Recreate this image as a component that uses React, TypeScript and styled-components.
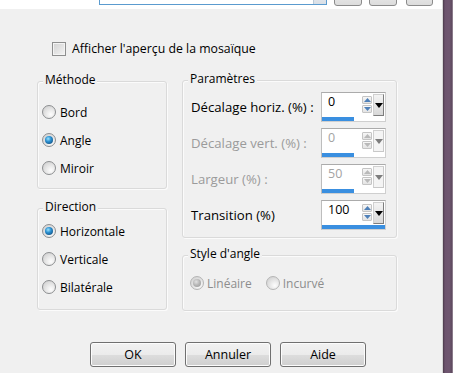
import styled, { createGlobalStyle } from 'styled-components';

const GlobalStyle = createGlobalStyle`
  html, body {
    margin: 0;
    padding: 0;
  }
  body {
    background: #f0f0f0;
    font-family: "Open Sans", "Noto Sans", sans-serif;
    color: #000;
  }
`;

interface Param {
  label: string;
  value: string;
  fill: number;
  disabled?: boolean;
}

const params: Param[] = [
  { label: 'Décalage horiz. (%) :', value: '0', fill: 0.5 },
  { label: 'Décalage vert. (%) :', value: '0', fill: 0.5, disabled: true },
  { label: 'Largeur (%) :', value: '50', fill: 0.5, disabled: true },
  { label: 'Transition (%)', value: '100', fill: 1 },
];

function Arrow({ dir, color }: { dir: 'up' | 'down'; color: string }) {
  return (
    <svg width='7' height='4' viewBox='0 0 7 4'>
      {dir === 'up' ? (
        <polygon points='0,4 3.5,0 7,4' fill={color} />
      ) : (
        <polygon points='0,0 3.5,4 7,0' fill={color} />
      )}
    </svg>
  );
}

function Spinner({ value, fill, disabled }: Param) {
  return (
    <SpinBox>
      <SpinTop>
        <SpinValue $disabled={disabled}>{value}</SpinValue>
        <SpinArrows>
          <SpinArrow>
            <Arrow dir='up' color={disabled ? '#b9b9b9' : '#4f80b8'} />
          </SpinArrow>
          <SpinArrow>
            <Arrow dir='down' color={disabled ? '#b9b9b9' : '#4f80b8'} />
          </SpinArrow>
        </SpinArrows>
        <DropBtn $disabled={disabled}>
          <svg width='8' height='5' viewBox='0 0 8 5'>
            <polygon points='0,0 4,5 8,0' fill={disabled ? '#7d7d7d' : '#000'} />
          </svg>
        </DropBtn>
      </SpinTop>
      <SpinBar style={{ width: `${fill * 100}%` }} />
    </SpinBox>
  );
}

function Radio({ label, checked, disabled }: { label: string; checked?: boolean; disabled?: boolean }) {
  return (
    <RadioItem $disabled={disabled}>
      <RadioDot $checked={checked} $disabled={disabled} />
      {label}
    </RadioItem>
  );
}

export default function App() {
  return (
    <>
      <GlobalStyle />
      <Window>
        <Panel>
          <TopStrip>
            <ComboBox>
              <ComboArrow />
            </ComboBox>
            <ToolButton $w={28} $ml={7} />
            <ToolButton $w={28} $ml={7} />
            <ToolButton $w={27} $ml={9} />
          </TopStrip>

          <CheckRow>
            <CheckBox />
            Afficher l'aperçu de la mosaïque
          </CheckRow>

          <Columns>
            <Column $w={130} $pt={1}>
              <GroupBox $h={108}>
                <Legend>Méthode</Legend>
                <RadioList $pt={11}>
                  <Radio label='Bord' />
                  <Radio label='Angle' checked />
                  <Radio label='Miroir' />
                </RadioList>
              </GroupBox>
              <GroupBox $h={102} $mt={19}>
                <Legend>Direction</Legend>
                <RadioList $pt={3}>
                  <Radio label='Horizontale' checked />
                  <Radio label='Verticale' />
                  <Radio label='Bilatérale' />
                </RadioList>
              </GroupBox>
            </Column>

            <Column $w={215}>
              <GroupBox $h={158}>
                <Legend>Paramètres</Legend>
                <ParamList>
                  {params.map((p) => (
                    <ParamRow key={p.label}>
                      <ParamLabel $disabled={p.disabled}>{p.label}</ParamLabel>
                      <Spinner {...p} />
                    </ParamRow>
                  ))}
                </ParamList>
              </GroupBox>
              <GroupBox $h={56} $mt={17}>
                <Legend>Style d'angle</Legend>
                <InlineRadios>
                  <Radio label='Linéaire' checked disabled />
                  <Radio label='Incurvé' disabled />
                </InlineRadios>
              </GroupBox>
            </Column>
          </Columns>

          <ButtonRow>
            <DialogButton>OK</DialogButton>
            <DialogButton>Annuler</DialogButton>
            <DialogButton>Aide</DialogButton>
          </ButtonRow>
        </Panel>
        <Frame />
      </Window>
    </>
  );
}

const Window = styled.div`
  display: flex;
  width: 453px;
  height: 373px;
  overflow: hidden;
`;
const Panel = styled.div`
  width: 442px;
  flex-shrink: 0;
  display: flex;
  flex-direction: column;
  background: #f0f0f0;
`;
const Frame = styled.div`
  flex: 1;
  border-left: 1px solid #d6d6d6;
  border-right: 1px solid #8a7a8a;
  background: linear-gradient(90deg, #4b3a4b 0, #6c536d 2px, #6f5670 70%, #5d4a5e 100%);
`;
const TopStrip = styled.div`
  height: 9px;
  flex-shrink: 0;
  display: flex;
  align-items: flex-end;
  padding-left: 99px;
  background: #fff;
  overflow: hidden;
`;
const ComboBox = styled.div`
  box-sizing: border-box;
  width: 228px;
  height: 20px;
  margin-bottom: 4px;
  display: flex;
  justify-content: flex-end;
  border: 1px solid #5b9bcf;
  background: #fff;
`;
const ComboArrow = styled.div`
  width: 12px;
  background: linear-gradient(#eef2f6, #d9dfe6);
  border-left: 1px solid #b9c9d8;
`;
const ToolButton = styled.div<{ $w: number; $ml: number }>`
  box-sizing: border-box;
  width: ${(p) => p.$w}px;
  height: 20px;
  margin: 0 0 3px ${(p) => p.$ml}px;
  border: 1px solid #8b8b8b;
  border-radius: 3px;
  background: linear-gradient(#f2f2f2, #dcdcdc);
`;
const CheckRow = styled.label`
  display: flex;
  align-items: center;
  gap: 6px;
  height: 13px;
  margin: 33px 0 0 52px;
  font-size: 12.3px;
  line-height: 13px;
`;
const CheckBox = styled.span`
  box-sizing: border-box;
  width: 14px;
  height: 14px;
  border: 1px solid #8e8f8f;
  background: linear-gradient(135deg, #d2d2d2, #f4f4f4);
  box-shadow: inset 0 0 0 1px #f4f4f4;
`;
const Columns = styled.div`
  display: flex;
  align-items: flex-start;
  gap: 15px;
  margin: 25px 0 0 37px;
`;
const Column = styled.div<{ $w: number; $pt?: number }>`
  width: ${(p) => p.$w}px;
  padding-top: ${(p) => p.$pt ?? 0}px;
  display: flex;
  flex-direction: column;
`;
const GroupBox = styled.div<{ $h: number; $mt?: number }>`
  box-sizing: border-box;
  height: ${(p) => p.$h}px;
  margin-top: ${(p) => p.$mt ?? 0}px;
  display: flex;
  flex-direction: column;
  border: 1px solid #dadada;
  border-radius: 3px;
  box-shadow: inset 1px 1px 0 #fbfbfb, 1px 1px 0 #fbfbfb;
`;
const Legend = styled.div`
  align-self: flex-start;
  margin: -9px 0 0 5px;
  padding: 0 2px;
  background: #f0f0f0;
  font-size: 12px;
  line-height: 14px;
`;
const RadioList = styled.div<{ $pt: number }>`
  display: flex;
  flex-direction: column;
  padding: ${(p) => p.$pt}px 0 0 4px;
`;
const RadioItem = styled.label<{ $disabled?: boolean }>`
  display: flex;
  align-items: center;
  gap: 4px;
  height: 28px;
  font-size: 12px;
  color: ${(p) => (p.$disabled ? '#8d8d8d' : '#000')};
`;
const RadioDot = styled.span<{ $checked?: boolean; $disabled?: boolean }>`
  position: relative;
  box-sizing: border-box;
  width: 14px;
  height: 14px;
  border-radius: 50%;
  border: 1px solid ${(p) => (p.$disabled ? '#b5b5b5' : '#8c8e90')};
  background: radial-gradient(circle at 65% 70%, #fdfdfd 0, #e6e6e6 45%, #c9c9c9 100%);
  &::after {
    content: '';
    display: ${(p) => (p.$checked ? 'block' : 'none')};
    position: absolute;
    inset: 2px;
    border-radius: 50%;
    background: ${(p) =>
      p.$disabled
        ? 'radial-gradient(circle at 40% 35%, #e2e2e2 0, #b4b4b4 50%, #979797 100%)'
        : 'radial-gradient(circle at 40% 35%, #9be4ff 0, #2a8fd0 40%, #0b3a66 100%)'};
  }
`;
const ParamList = styled.div`
  display: flex;
  flex-direction: column;
  gap: 6px;
  padding: 6px 10px 0 8px;
`;
const ParamRow = styled.div`
  display: flex;
  align-items: center;
  justify-content: space-between;
  height: 30px;
`;
const ParamLabel = styled.span<{ $disabled?: boolean }>`
  font-size: 13.2px;
  color: ${(p) => (p.$disabled ? '#9b9b9b' : '#000')};
`;
const SpinBox = styled.div`
  box-sizing: border-box;
  width: 65px;
  height: 30px;
  display: flex;
  flex-direction: column;
  background: #fff;
  border: 1px solid #cfcfcf;
  border-top-color: #ababab;
  border-left-color: #bdbdbd;
`;
const SpinTop = styled.div`
  flex: 1;
  display: flex;
`;
const SpinValue = styled.div<{ $disabled?: boolean }>`
  flex: 1;
  padding: 2px 0 0 6px;
  font-size: 12.5px;
  line-height: 14px;
  color: ${(p) => (p.$disabled ? '#a3a3a3' : '#000')};
`;
const SpinArrows = styled.div`
  display: flex;
  flex-direction: column;
  gap: 1px;
  margin: 3px 1px 0 0;
`;
const SpinArrow = styled.div`
  box-sizing: border-box;
  width: 10px;
  height: 8px;
  display: flex;
  align-items: center;
  justify-content: center;
  border: 1px solid #c4c4c4;
  border-radius: 1px;
  background: linear-gradient(#f7f7f7, #e3e3e3);
`;
const DropBtn = styled.div<{ $disabled?: boolean }>`
  box-sizing: border-box;
  width: 11px;
  height: 22px;
  margin: 1px 1px 0 0;
  display: flex;
  align-items: flex-start;
  justify-content: center;
  padding-top: 8px;
  border: 1px solid ${(p) => (p.$disabled ? '#c8c8c8' : '#7d7d7d')};
  border-top-color: #d0d0d0;
  border-left-color: #d0d0d0;
  background: ${(p) => (p.$disabled ? '#f4f4f4' : 'linear-gradient(#f4f4f4, #d8d8d8)')};
`;
const SpinBar = styled.div`
  height: 4px;
  background: #3a8fe0;
`;
const InlineRadios = styled.div`
  display: flex;
  gap: 14px;
  padding: 8px 0 0 7px;
  & > label {
    gap: 3px;
  }
`;
const ButtonRow = styled.div`
  display: flex;
  gap: 9px;
  margin: 31px 0 0 90px;
`;
const DialogButton = styled.button`
  box-sizing: border-box;
  width: 86px;
  height: 25px;
  padding: 0;
  border: 1px solid #707070;
  border-radius: 3px;
  background: linear-gradient(#f2f2f2 0, #ebebeb 50%, #dddddd 51%, #cfcfcf 100%);
  box-shadow: inset 0 0 0 1px #fcfcfc;
  font-family: "Open Sans", "Noto Sans", sans-serif;
  font-size: 12.5px;
  color: #000;
`;
